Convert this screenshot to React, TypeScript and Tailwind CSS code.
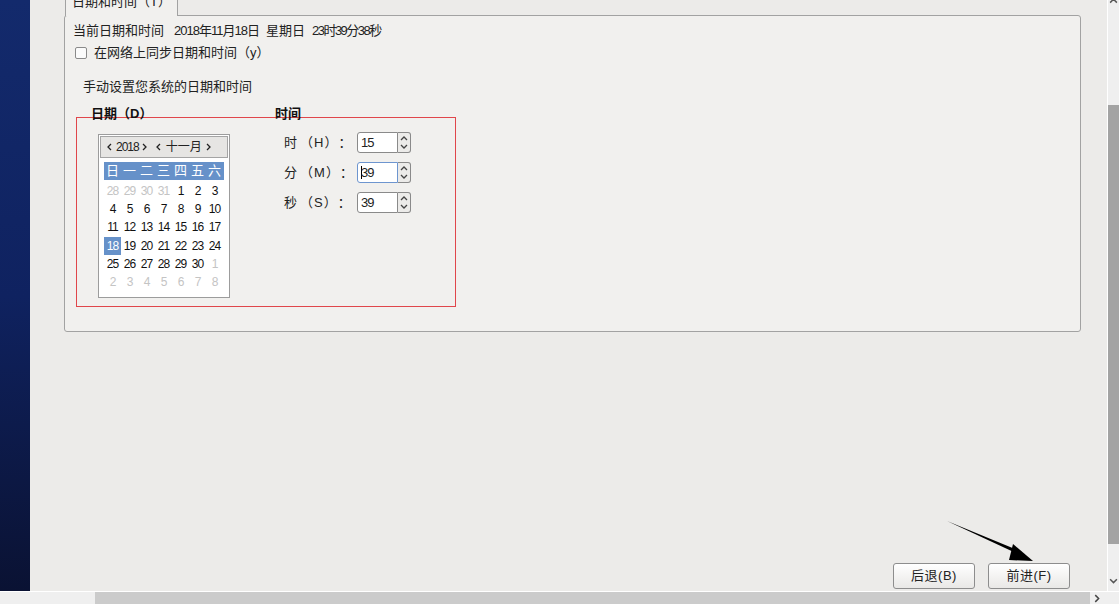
const font = "font-['Liberation_Sans','Noto_Sans_CJK_SC',sans-serif]";

const prevDays = [28, 29, 30, 31];
const nextDays = [1, 2, 3, 4, 5, 6, 7, 8];

function Chevron({ dir, className }: { dir: "up" | "down" | "left" | "right"; className?: string }) {
  const d = {
    up: "M1 5 L4 2 L7 5",
    down: "M1 2 L4 5 L7 2",
    left: "M5 1 L2 4 L5 7",
    right: "M2 1 L5 4 L2 7",
  }[dir];
  return (
    <svg viewBox="0 0 8 8" className={className} fill="none" stroke="currentColor" strokeWidth={1.3}>
      <path d={d} />
    </svg>
  );
}

function Spin({ value, focused }: { value: string; focused?: boolean }) {
  return (
    <div className="flex h-[21px]">
      <div
        className={`w-[41px] h-full bg-white rounded-l-[3px] border flex items-center pl-[3px] text-[13px] ${
          focused ? "border-[#6d95cf]" : "border-[#8a8a8a]"
        }`}
      >
        {focused && <span className="w-px h-[13px] bg-black -mr-px" />}
        <span className="tracking-[-1px]">{value}</span>
      </div>
      <div className="w-[13px] h-full border border-l-0 border-[#8a8a8a] rounded-r-[3px] bg-[#ecebe9] flex flex-col items-center justify-center text-[#444]">
        <Chevron dir="up" className="w-[8px] h-[8px]" />
        <Chevron dir="down" className="w-[8px] h-[8px]" />
      </div>
    </div>
  );
}

function Calendar() {
  const days: { n: number; muted?: boolean; sel?: boolean }[] = [
    ...prevDays.map((n) => ({ n, muted: true })),
    ...Array.from({ length: 30 }, (_, i) => ({ n: i + 1, sel: i + 1 === 18 })),
    ...nextDays.map((n) => ({ n, muted: true })),
  ];
  return (
    <div className="w-[132px] h-[164px] border border-[#9c9c9c] bg-white p-px">
      <div className="h-[22px] border border-[#a4a4a4] bg-[#e6e5e3] flex items-center pl-[5px] text-[12px] text-[#222]">
        <Chevron dir="left" className="w-[8px] h-[8px]" />
        <span className="mx-[2px] tracking-[-1px]">2018</span>
        <Chevron dir="right" className="w-[8px] h-[8px]" />
        <Chevron dir="left" className="w-[8px] h-[8px] ml-[6px]" />
        <span className="mx-[3px]">十一月</span>
        <Chevron dir="right" className="w-[8px] h-[8px]" />
      </div>
      <div className="px-[4px] pt-[4px]">
        <div className="grid grid-cols-[repeat(7,17px)] h-[18px] bg-[#6691c9] text-white text-[13px] leading-[18px] text-center">
          {["日", "一", "二", "三", "四", "五", "六"].map((w) => (
            <span key={w}>{w}</span>
          ))}
        </div>
        <div className="grid grid-cols-[repeat(7,17px)] gap-y-[0.2px] text-[12px] leading-[18px] text-center tracking-[-1px] mt-[2px]">
          {days.map((d, i) => (
            <span
              key={i}
              className={d.muted ? "text-[#c4c4c4]" : d.sel ? "bg-[#6691c9] text-white" : "text-[#111]"}
            >
              {d.n}
            </span>
          ))}
        </div>
      </div>
    </div>
  );
}

function TimeRow({ label, unit, value, focused }: { label: string; unit: string; value: string; focused?: boolean }) {
  return (
    <div className="flex items-center h-[21px]">
      <div className="w-[73px] flex items-center text-[13px] text-[#222]">
        <span>{label}</span>
        <span className="ml-[3px] tracking-[1px]">（{unit}）</span>
        <span>：</span>
      </div>
      <Spin value={value} focused={focused} />
    </div>
  );
}

function Button({ children }: { children: React.ReactNode }) {
  return (
    <button className="w-[82px] h-[26px] rounded-[3px] border border-[#8d8d8d] bg-gradient-to-b from-white to-[#e9e8e6] text-[13px] text-[#222] tracking-[0.5px]">
      {children}
    </button>
  );
}

export default function App() {
  return (
    <div className={`w-[1119px] h-[604px] flex flex-col overflow-hidden bg-[#ecebe9] ${font}`}>
      <div className="flex h-[591px]">
        {/* desktop edge */}
        <div className="w-[30px] bg-gradient-to-b from-[#132a6c] via-[#0f2260] to-[#0a1233]" />

        {/* main page */}
        <div className="relative flex-1 flex flex-col overflow-hidden pl-[34px] pr-[26px]">
          <div className="flex pl-px -mt-[14px]">
            <div className="relative z-10 -mb-px h-[30px] px-[6px] flex items-center bg-[#f1f0ee] border border-b-0 border-[#a2a2a2] rounded-t-[3px] text-[13px] text-[#222]">
              日期和时间（T）
            </div>
          </div>
          <div className="h-[317px] border border-[#a2a2a2] rounded-[3px] bg-[#f1f0ee] pl-[8px] pt-[7px] text-[13px] text-[#222]">
            <div className="flex items-center h-[16px]">
              <span>当前日期和时间</span>
              <span className="ml-[10px] tracking-[-1px]">2018年11月18日</span>
              <span className="ml-[7px]">星期日</span>
              <span className="ml-[7px] tracking-[-1.5px]">23时39分38秒</span>
            </div>
            <div className="flex items-center h-[16px] mt-[6px] pl-[2px]">
              <span className="w-[12px] h-[12px] border border-[#8a8a8a] rounded-[2px] bg-[#fbfbfb]" />
              <span className="ml-[7px]">在网络上同步日期和时间（y）</span>
            </div>
            <div className="h-[16px] mt-[18px] pl-[10px] flex items-center">手动设置您系统的日期和时间</div>

            <div className="mt-[11px] ml-[3px] w-[380px]">
              <div className="flex h-[16px] items-center font-bold text-[13px] text-[#111]">
                <span className="ml-[15px] w-[184px]">日期（D）</span>
                <span>时间</span>
              </div>
              <div className="-mt-[5px] h-[190px] border border-[#e0464b] flex pl-[21px] pt-[16px]">
                <Calendar />
                <div className="ml-[54px] -mt-[2px] flex flex-col gap-[9px]">
                  <TimeRow label="时" unit="H" value="15" />
                  <TimeRow label="分" unit="M" value="39" focused />
                  <TimeRow label=" 秒" unit="S" value="39" />
                </div>
              </div>
            </div>
          </div>

          <div className="flex-1" />
          <div className="flex justify-end gap-[13px] pr-[11px] pb-[2px]">
            <Button>后退(B)</Button>
            <Button>前进(F)</Button>
          </div>

          {/* annotation arrow */}
          <svg className="absolute left-[910px] top-[515px] w-[100px] h-[55px]" viewBox="0 0 100 55">
            <path d="M7 6 L80 40 L82 37 Z" fill="#000" />
            <path d="M73 29 L93 46 L69 45 Z" fill="#000" />
          </svg>
        </div>

        {/* vertical scrollbar */}
        <div className="w-[12px] bg-[#efefef] border-l border-white flex flex-col items-center">
          <Chevron dir="up" className="w-[9px] h-[9px] -mt-[3px] text-[#555]" />
          <div className="h-[99px]" />
          <div className="w-full h-[439px] bg-[#a3a3a3]" />
          <div className="flex-1" />
          <Chevron dir="down" className="w-[9px] h-[9px] mb-[5px] text-[#555]" />
        </div>
      </div>

      {/* horizontal scrollbar */}
      <div className="h-[13px] border-t border-white bg-[#efefef] flex items-center">
        <div className="w-[95px]" />
        <div className="w-[995px] h-full bg-[#cbcbcb]" />
        <Chevron dir="right" className="w-[9px] h-[9px] ml-[3px] text-[#444]" />
      </div>
    </div>
  );
}
